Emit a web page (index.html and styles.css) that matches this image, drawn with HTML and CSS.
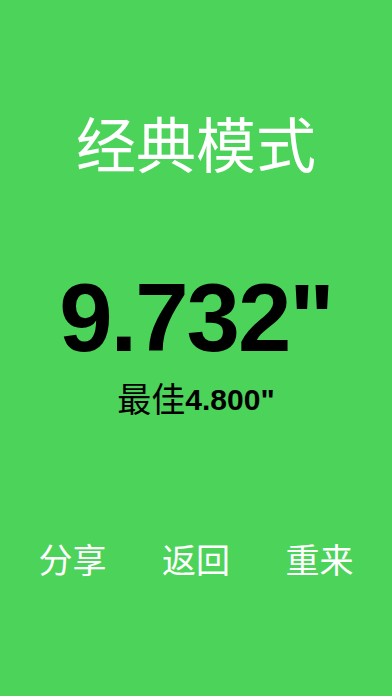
FILE: index.html
```html
<!DOCTYPE html>
<html lang="zh">
<head>
<meta charset="utf-8">
<link rel="stylesheet" href="styles.css">
</head>
<body>
<main class="screen">
  <h1 class="title">经典模式</h1>
  <div class="score">9.732"</div>
  <div class="best"><span class="best-label">最佳</span><span class="best-value">4.800"</span></div>
  <nav class="actions">
    <span class="action">分享</span>
    <span class="action">返回</span>
    <span class="action">重来</span>
  </nav>
</main>
</body>
</html>
```
FILE: styles.css
```css
html, body {
  margin: 0;
  padding: 0;
}
body {
  background: #4cd35a;
  width: 392px;
  height: 696px;
  overflow: hidden;
}
.screen {
  display: flex;
  flex-direction: column;
  align-items: center;
  font-family: "Noto Sans CJK SC", "Liberation Sans", sans-serif;
}
.title {
  margin: 112px 0 0;
  font-size: 60px;
  line-height: 60px;
  font-weight: 400;
  color: #ffffff;
}
.score {
  margin-top: 98px;
  font-family: "Liberation Sans", Arial, sans-serif;
  font-weight: 700;
  font-size: 96px;
  line-height: 96px;
  letter-spacing: -2px;
  color: #000000;
}
.best {
  margin-top: 12px;
  height: 40px;
  display: flex;
  align-items: center;
  color: #000000;
}
.best-label {
  font-family: "Noto Sans CJK SC", sans-serif;
  font-size: 34px;
  font-weight: 400;
  line-height: 40px;
}
.best-value {
  font-family: "Liberation Sans", Arial, sans-serif;
  font-weight: 700;
  font-size: 30px;
  line-height: 40px;
  margin-top: 4px;
}
.actions {
  margin-top: 124px;
  display: grid;
  grid-template-columns: repeat(3, 123.5px);
  justify-items: center;
}
.action {
  font-size: 34px;
  line-height: 34px;
  color: #ffffff;
}
```
